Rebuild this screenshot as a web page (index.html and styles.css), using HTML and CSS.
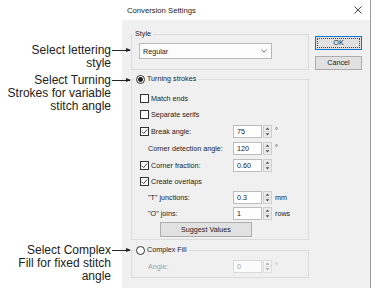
FILE: index.html
```html
<!DOCTYPE html>
<html>
<head>
<meta charset="utf-8">
<title>Conversion Settings</title>
<link rel="stylesheet" href="styles.css">
</head>
<body>

<div id="page">
    <div id="notes">
        <div id="noteStyle" class="note">Select lettering<span class="arrow"></span><br>style</div>
        <div id="noteTurn" class="note">Select Turning<span class="arrow"></span><br>Strokes for variable<br>stitch angle</div>
        <div id="noteFill" class="note">Select Complex<span class="arrow"></span><br>Fill for fixed stitch<br>angle</div>
    </div>

    <div id="dialog">
        <div id="titleBar">
            <span>Conversion Settings</span>
            <svg class="closeIcon" width="8" height="8" viewBox="0 0 8 8"><path d="M0.5 0.5L7.5 7.5M7.5 0.5L0.5 7.5" stroke="#333" stroke-width="0.9" fill="none"/></svg>
        </div>

        <div id="dialogBody">
            <div id="groupsCol">
                <div id="styleGroup" class="group">
                    <div class="groupTitle">Style</div>
                    <div class="dropdown">
                        <span>Regular</span>
                        <svg width="6" height="4" viewBox="0 0 6 4"><path d="M0.5 0.8L3 3.2L5.5 0.8" stroke="#666" stroke-width="0.9" fill="none"/></svg>
                    </div>
                </div>

                <div id="turnGroup" class="group">
                    <div class="groupTitle radioTitle"><span class="radio checked"></span>Turning strokes</div>

                    <div class="row"><span class="check"></span>Match ends</div>
                    <div class="row tall"><span class="check"></span>Separate serifs</div>
                    <div class="row tall">
                        <div class="lbl"><span class="check"><svg width="7" height="7" viewBox="0 0 7 7"><path d="M0.8 3.6L2.7 5.5L6.2 1.4" stroke="#333" stroke-width="0.9" fill="none"/></svg></span>Break angle:</div>
                        <div class="field">75</div>
                        <svg class="spin" width="9" height="13" viewBox="0 0 9 13"><rect x="0.5" y="0.5" width="8" height="12" fill="#ececec" stroke="#cfcfcf"/><path d="M1 6.5H8" stroke="#d8d8d8"/><path d="M2.5 4.8L4.5 2.6L6.5 4.8Z" fill="#555"/><path d="M2.5 8.2L4.5 10.4L6.5 8.2Z" fill="#555"/></svg>
                        <span class="unit deg">°</span>
                    </div>
                    <div class="row tall">
                        <div class="lbl sub">Corner detection angle:</div>
                        <div class="field">120</div>
                        <svg class="spin" width="9" height="13" viewBox="0 0 9 13"><rect x="0.5" y="0.5" width="8" height="12" fill="#ececec" stroke="#cfcfcf"/><path d="M1 6.5H8" stroke="#d8d8d8"/><path d="M2.5 4.8L4.5 2.6L6.5 4.8Z" fill="#555"/><path d="M2.5 8.2L4.5 10.4L6.5 8.2Z" fill="#555"/></svg>
                        <span class="unit deg">°</span>
                    </div>
                    <div class="row">
                        <div class="lbl"><span class="check"><svg width="7" height="7" viewBox="0 0 7 7"><path d="M0.8 3.6L2.7 5.5L6.2 1.4" stroke="#333" stroke-width="0.9" fill="none"/></svg></span>Corner fraction:</div>
                        <div class="field">0.60</div>
                        <svg class="spin" width="9" height="13" viewBox="0 0 9 13"><rect x="0.5" y="0.5" width="8" height="12" fill="#ececec" stroke="#cfcfcf"/><path d="M1 6.5H8" stroke="#d8d8d8"/><path d="M2.5 4.8L4.5 2.6L6.5 4.8Z" fill="#555"/><path d="M2.5 8.2L4.5 10.4L6.5 8.2Z" fill="#555"/></svg>
                    </div>
                    <div class="row"><span class="check"><svg width="7" height="7" viewBox="0 0 7 7"><path d="M0.8 3.6L2.7 5.5L6.2 1.4" stroke="#333" stroke-width="0.9" fill="none"/></svg></span>Create overlaps</div>
                    <div class="row">
                        <div class="lbl sub">"T" junctions:</div>
                        <div class="field">0.3</div>
                        <svg class="spin" width="9" height="13" viewBox="0 0 9 13"><rect x="0.5" y="0.5" width="8" height="12" fill="#ececec" stroke="#cfcfcf"/><path d="M1 6.5H8" stroke="#d8d8d8"/><path d="M2.5 4.8L4.5 2.6L6.5 4.8Z" fill="#555"/><path d="M2.5 8.2L4.5 10.4L6.5 8.2Z" fill="#555"/></svg>
                        <span class="unit">mm</span>
                    </div>
                    <div class="row">
                        <div class="lbl sub">"O" joins:</div>
                        <div class="field">1</div>
                        <svg class="spin" width="9" height="13" viewBox="0 0 9 13"><rect x="0.5" y="0.5" width="8" height="12" fill="#ececec" stroke="#cfcfcf"/><path d="M1 6.5H8" stroke="#d8d8d8"/><path d="M2.5 4.8L4.5 2.6L6.5 4.8Z" fill="#555"/><path d="M2.5 8.2L4.5 10.4L6.5 8.2Z" fill="#555"/></svg>
                        <span class="unit">rows</span>
                    </div>
                    <div id="suggestButton" class="button">Suggest Values</div>
                </div>

                <div id="complexGroup" class="group">
                    <div class="groupTitle radioTitle"><span class="radio"></span>Complex Fill</div>
                    <div class="row disabled">
                        <div class="lbl sub">Angle:</div>
                        <div class="field">0</div>
                        <svg class="spin" width="9" height="13" viewBox="0 0 9 13"><rect x="0.5" y="0.5" width="8" height="12" fill="#f4f4f4" stroke="#dedede"/><path d="M1 6.5H8" stroke="#e2e2e2"/><path d="M2.5 4.8L4.5 2.6L6.5 4.8Z" fill="#a8a8a8"/><path d="M2.5 8.2L4.5 10.4L6.5 8.2Z" fill="#a8a8a8"/></svg>
                        <span class="unit deg">°</span>
                    </div>
                </div>
            </div>

            <div id="buttonsCol">
                <div id="okButton" class="button">OK</div>
                <div id="cancelButton" class="button">Cancel</div>
            </div>
        </div>
    </div>
</div>

</body>
</html>
```

FILE: styles.css
```css
body {
    margin: 0;
    background-color: #ffffff;
    font-family: "Liberation Sans", Arial, sans-serif;
}

#page {
    display: flex;
    width: 389px;
    height: 303px;
    overflow: hidden;
}

/* annotations on the left */

#notes {
    width: 122px;
    flex: none;
    font-size: 12px;
    line-height: 13px;
    color: #222222;
}

.note {
    position: relative;
    margin-right: 11px;
    text-align: right;
}

#noteStyle {
    margin-top: 44px;
}

#noteTurn {
    margin-top: 4px;
}

#noteFill {
    margin-top: 131px;
}

.arrow {
    position: absolute;
    top: 6px;
    left: calc(100% + 1px);
    width: 18px;
    height: 1px;
    background-color: #222222;
}

.arrow::after {
    content: "";
    position: absolute;
    right: -1px;
    top: -2px;
    border-left: 5px solid #222222;
    border-top: 2.5px solid transparent;
    border-bottom: 2.5px solid transparent;
}

/* dialog */

#dialog {
    flex: none;
    width: 248px;
    height: 288px;
    border-right: 1px solid #9a9a9a;
    color: #222222;
}

#titleBar {
    height: 20px;
    display: flex;
    align-items: center;
    justify-content: space-between;
    padding: 0 8px 0 5px;
    font-size: 7.7px;
    background-color: #ffffff;
}

#dialogBody {
    display: flex;
    align-items: flex-start;
    box-sizing: border-box;
    height: 268px;
    padding: 14px 8px 0 9px;
    background-color: #f0f0f0;
    font-size: 7.2px;
}

#groupsCol {
    width: 178px;
}

.group {
    border: 1px solid #dcdcdc;
    padding: 0 8px;
}

#styleGroup {
    padding-bottom: 10px;
}

#turnGroup {
    margin-top: 9px;
    padding-bottom: 2px;
}

#complexGroup {
    margin-top: 10px;
    padding-bottom: 3px;
}

.groupTitle {
    display: flex;
    align-items: center;
    width: fit-content;
    height: 10px;
    line-height: 10px;
    margin: -6px 0 0 -7px;
    padding: 0 2px;
    background-color: #f0f0f0;
}

.radioTitle {
    margin-left: -6px;
}

#turnGroup .radioTitle {
    margin-bottom: 6px;
}

#complexGroup .radioTitle {
    margin-bottom: 3px;
}

.radio {
    width: 9px;
    height: 9px;
    box-sizing: border-box;
    border: 1px solid #333333;
    border-radius: 50%;
    margin-right: 2px;
    background-color: #ffffff;
}

.radio.checked {
    background: radial-gradient(circle, #222222 0 2.1px, #ffffff 2.7px);
}

.dropdown {
    display: flex;
    align-items: center;
    justify-content: space-between;
    box-sizing: border-box;
    width: 133px;
    height: 16px;
    margin: 4px 0 0 -1px;
    padding: 0 4px 0 3px;
    border: 1px solid #b9b9b9;
    background-color: #fcfcfc;
}

.row {
    display: flex;
    align-items: center;
    height: 16px;
}

.row.tall {
    height: 17px;
}

.row.disabled {
    color: #a3a3a3;
}

.lbl {
    display: flex;
    align-items: center;
    width: 93px;
    flex: none;
    box-sizing: border-box;
}

.lbl.sub {
    padding-left: 8px;
}

.check {
    display: flex;
    align-items: center;
    justify-content: center;
    width: 9px;
    height: 9px;
    box-sizing: border-box;
    border: 1px solid #333333;
    background-color: #ffffff;
    margin-right: 2px;
}

.field {
    width: 29px;
    height: 13px;
    box-sizing: border-box;
    border: 1px solid #bcbcbc;
    background-color: #ffffff;
    padding-left: 3px;
    line-height: 11px;
}

.disabled .field {
    border-color: #dadada;
    background-color: #fbfbfb;
}

.spin {
    margin-left: 1px;
}

.unit {
    margin-left: 3px;
}

.unit.deg {
    position: relative;
    top: -1px;
}

.button {
    box-sizing: border-box;
    border: 1px solid #adadad;
    background-color: #e1e1e1;
    text-align: center;
}

#suggestButton {
    width: 92px;
    height: 15px;
    line-height: 13px;
    margin: 1px 0 0 20px;
}

#buttonsCol {
    width: 47px;
    margin: 2px 0 0 6px;
}

#okButton {
    height: 14px;
    line-height: 12px;
    border-color: #0078d7;
    outline: 1px dotted #444444;
    outline-offset: -3px;
}

#cancelButton {
    height: 14px;
    line-height: 12px;
    margin-top: 6px;
}
```
